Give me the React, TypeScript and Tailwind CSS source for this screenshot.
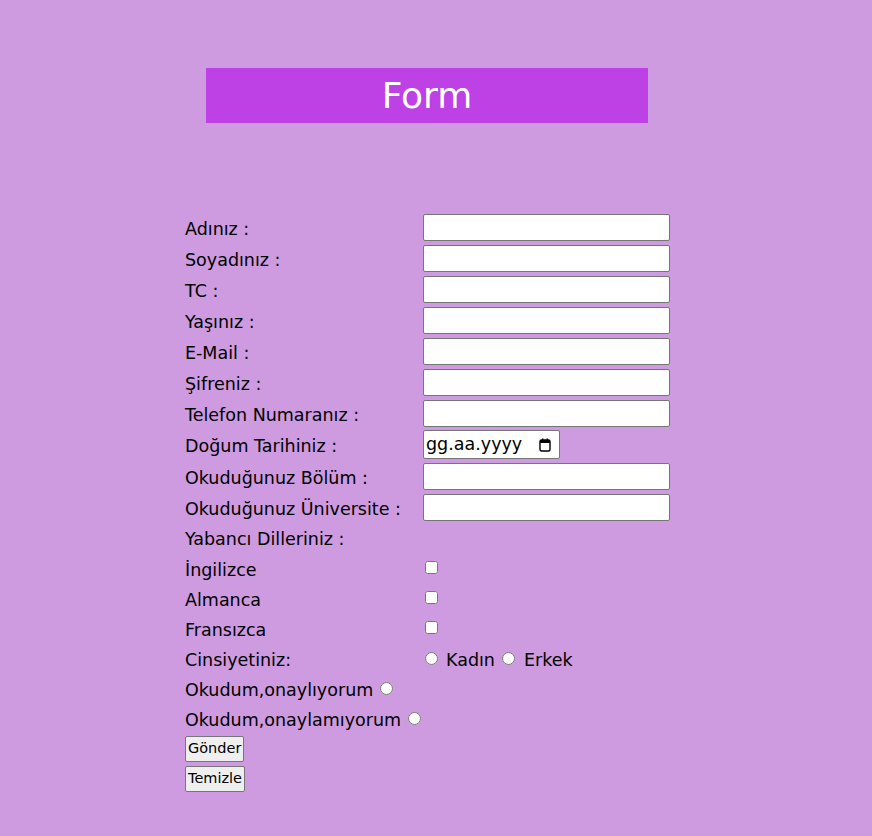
import React from 'react';

const font = { fontFamily: '"Comic Sans MS", "DejaVu Sans", sans-serif' };

const App: React.FC = () => {
  const inputRows = ['Adınız :', 'Soyadınız :', 'TC :', 'Yaşınız :', 'E-Mail :', 'Şifreniz :', 'Telefon Numaranız :'];
  const langs = ['İngilizce', 'Almanca', 'Fransızca'];

  return (
    <div className="min-h-[836px] bg-[#CE9AE0] text-black text-[17.5px]" style={font}>
      {/* başlık */}
      <div className="pt-[68px] pl-[206px]">
        <div className="w-[442px] h-[55px] bg-[#BE41E6] text-white text-[36px] flex items-center justify-center">
          Form
        </div>
      </div>

      {/* form tablosu */}
      <div className="mt-[89px] pl-[185px] flex flex-col">
        {inputRows.map((label) => (
          <div key={label} className="flex h-[31px]">
            <div className="w-[238px] h-full flex items-center pt-[3px]">{label}</div>
            <input type="text" className="mt-[2px] w-[247px] h-[27px] bg-white border border-[#767676] rounded-[2px] px-1" />
          </div>
        ))}

        {/* doğum tarihi */}
        <div className="flex h-[32px]">
          <div className="w-[238px] h-[31px] flex items-center pt-[3px]">Doğum Tarihiniz :</div>
          <div className="mt-[1px] w-[137px] h-[29px] bg-white border border-[#767676] rounded-[2px] flex items-center justify-between pl-[2px] pr-[8px]">
            <span className="leading-none">gg.aa.yyyy</span>
            <svg width="12" height="14" viewBox="0 0 12 14">
              <rect x="1" y="2" width="10" height="11" rx="1.5" fill="none" stroke="#000" strokeWidth="1.4" />
              <rect x="1" y="2" width="10" height="3" fill="#000" />
              <rect x="3" y="0.5" width="1.4" height="2.5" fill="#000" />
              <rect x="7.6" y="0.5" width="1.4" height="2.5" fill="#000" />
            </svg>
          </div>
        </div>

        {['Okuduğunuz Bölüm :', 'Okuduğunuz Üniversite :'].map((label) => (
          <div key={label} className="flex h-[31px]">
            <div className="w-[238px] h-full flex items-center pt-[3px]">{label}</div>
            <input type="text" className="mt-[2px] w-[247px] h-[27px] bg-white border border-[#767676] rounded-[2px] px-1" />
          </div>
        ))}

        <div className="flex h-[31px] items-center pt-[2px]">Yabancı Dilleriniz :</div>

        {langs.map((l) => (
          <div key={l} className="flex h-[30px] items-center">
            <div className="w-[238px] pt-[2px]">{l}</div>
            <input type="checkbox" className="m-0 ml-[2px] -mt-[4px] w-[13px] h-[13px]" />
          </div>
        ))}

        <div className="flex h-[30px] items-center">
          <div className="w-[238px] pt-[2px]">Cinsiyetiniz:</div>
          <input type="radio" name="cinsiyet" className="m-0 ml-[2px] -mt-[2px] w-[13px] h-[13px]" />
          <span className="ml-[8px] pt-[2px]">Kadın</span>
          <input type="radio" name="cinsiyet" className="m-0 ml-[7px] -mt-[2px] w-[13px] h-[13px]" />
          <span className="ml-[9px] pt-[2px]">Erkek</span>
        </div>

        <div className="flex h-[30px] items-center">
          <span className="pt-[2px]">Okudum,onaylıyorum</span>
          <input type="radio" name="onay" className="m-0 ml-[7px] -mt-[2px] w-[13px] h-[13px]" />
        </div>
        <div className="flex h-[30px] items-center">
          <span className="pt-[2px]">Okudum,onaylamıyorum</span>
          <input type="radio" name="onay" className="m-0 ml-[7px] -mt-[2px] w-[13px] h-[13px]" />
        </div>

        <div className="flex h-[30px] items-start">
          <button className="mt-[2px] h-[26px] px-[2px] text-[14.5px] bg-[#EFEFEF] border border-[#767676] rounded-[2px]">
            Gönder
          </button>
        </div>
        <div className="flex h-[30px] items-start">
          <button className="mt-[2px] h-[26px] px-[2px] text-[14.5px] bg-[#EFEFEF] border border-[#767676] rounded-[2px]">
            Temizle
          </button>
        </div>
      </div>
    </div>
  );
};

export default App;
